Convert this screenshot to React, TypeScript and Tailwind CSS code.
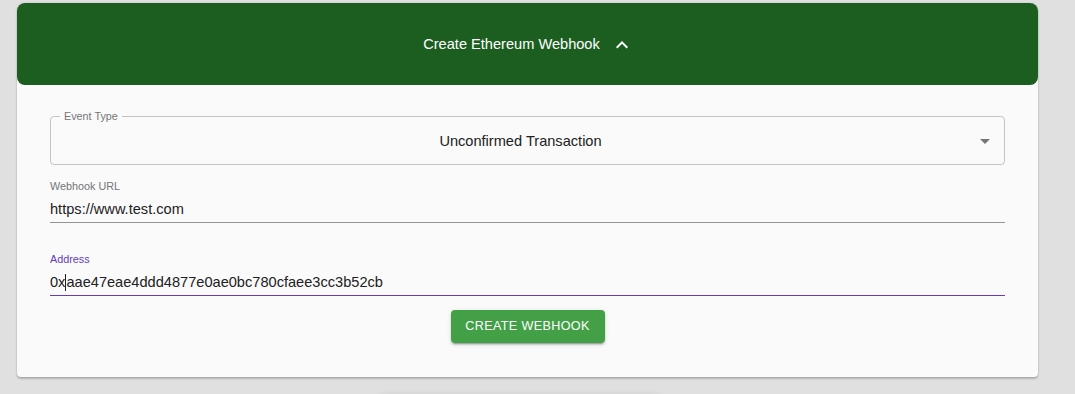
import React from "react";

export default function App() {
  return (
    <div
      className="h-[394px] w-full overflow-hidden bg-[#e0e0e0] pt-[3px]"
      style={{ fontFamily: '"Liberation Sans", Arial, sans-serif' }}
    >
      <div className="ml-[17px] w-[1021px] rounded-t-[8px] rounded-b-[4px] bg-[#fafafa] shadow-[0_2px_2px_rgba(0,0,0,0.2),0_0_2px_rgba(0,0,0,0.15)]">
        <div className="flex h-[82px] items-center justify-center gap-[10px] rounded-[8px] bg-[#1b5e20] text-white">
          <span className="ml-[2px] text-[14.6px] leading-none">Create Ethereum Webhook</span>
          <svg width="24" height="24" viewBox="0 0 24 24" fill="white" className="mt-[1px]">
            <path d="M12 8l-6 6 1.41 1.41L12 10.83l4.59 4.58L18 14z" />
          </svg>
        </div>

        <div className="flex flex-col px-[33px] pt-[31px] pb-[34px]">
          <div className="relative flex h-[49px] items-center justify-center rounded-[4px] border border-[#c4c4c4] pr-[14px]">
            <span className="absolute left-[9px] -top-[7px] bg-[#fafafa] px-[4px] text-[10.8px] leading-[12px] text-[#757575]">
              Event Type
            </span>
            <span className="mt-[3px] text-[14.6px] text-[#212121]">Unconfirmed Transaction</span>
            <svg
              width="24"
              height="24"
              viewBox="0 0 24 24"
              fill="#757575"
              className="absolute right-[7px] top-[12px]"
            >
              <path d="M7 10l5 5 5-5z" />
            </svg>
          </div>

          <div className="mt-[15px] flex flex-col">
            <span className="h-[12px] text-[10.8px] leading-[12px] text-[#757575]">Webhook URL</span>
            <div className="mt-[7px] border-b border-[#949494] pb-[3px]">
              <div className="h-[20px] text-[14.6px] leading-[20px] text-[#212121]">https://www.test.com</div>
            </div>
          </div>

          <div className="mt-[30px] flex flex-col">
            <span className="h-[12px] text-[10.8px] leading-[12px] text-[#673ab7]">Address</span>
            <div className="mt-[7px] border-b border-[#673ab7] pb-[3px]">
              <div className="flex h-[20px] items-center text-[14.6px] leading-[20px] text-[#212121]">
                <span>0x</span>
                <span className="h-[17px] w-px bg-[#212121]" />
                <span>aae47eae4ddd4877e0ae0bc780cfaee3cc3b52cb</span>
              </div>
            </div>
          </div>

          <div className="mt-[14px] flex justify-center">
            <button className="flex h-[33px] w-[154px] items-center justify-center rounded-[4px] bg-[#43a047] text-[12.6px] uppercase tracking-[0.36px] text-white shadow-[0_3px_1px_-2px_rgba(0,0,0,0.2),0_2px_2px_0_rgba(0,0,0,0.14),0_1px_5px_0_rgba(0,0,0,0.12)]">
              Create Webhook
            </button>
          </div>
        </div>
      </div>
      <div className="ml-[380px] mt-[22px] h-[40px] w-[280px] rounded-[4px] bg-[#e0e0e0] shadow-[0_-2px_10px_rgba(0,0,0,0.12)]" />
    </div>
  );
}
